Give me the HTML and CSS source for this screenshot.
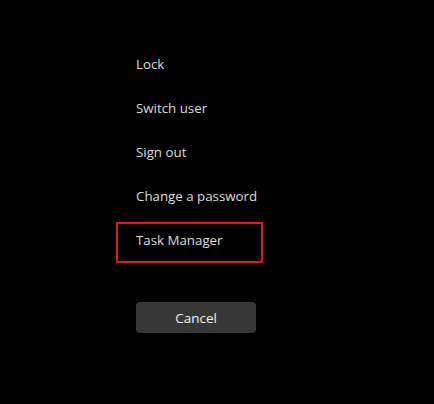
FILE: index.html
```html
<!DOCTYPE html>
<html lang="en">
<head>
<meta charset="utf-8">
<title>Security options</title>
<link rel="stylesheet" href="styles.css">
</head>
<body>
<main class="screen">
  <ul class="options">
    <li class="option">Lock</li>
    <li class="option">Switch user</li>
    <li class="option">Sign out</li>
    <li class="option">Change a password</li>
    <li class="option option--focused">Task Manager</li>
  </ul>
  <button class="cancel" type="button">Cancel</button>
</main>
</body>
</html>
```

FILE: styles.css
```css
html, body {
  margin: 0;
  padding: 0;
  background: #000;
}
body {
  width: 434px;
  height: 404px;
  overflow: hidden;
  font-family: "Open Sans", "Noto Sans", sans-serif;
  font-size: 13.3px;
  color: #dcdcdc;
}
.screen {
  display: flex;
  flex-direction: column;
  padding: 46px 0 0 116px;
}
.options {
  list-style: none;
  margin: 0;
  padding: 0;
  display: flex;
  flex-direction: column;
  gap: 3px;
}
.option {
  box-sizing: border-box;
  width: 147px;
  height: 41px;
  border: 2px solid transparent;
  padding: 0 0 6px 18px;
  display: flex;
  align-items: center;
  line-height: 20px;
}
.option--focused {
  border-color: #e81123;
}
.cancel {
  margin: 39px 0 0 20px;
  width: 120px;
  height: 31px;
  border: none;
  border-radius: 4px;
  background: #373737;
  color: #f0f0f0;
  font-family: inherit;
  font-size: 13.5px;
  padding: 0;
}
```
